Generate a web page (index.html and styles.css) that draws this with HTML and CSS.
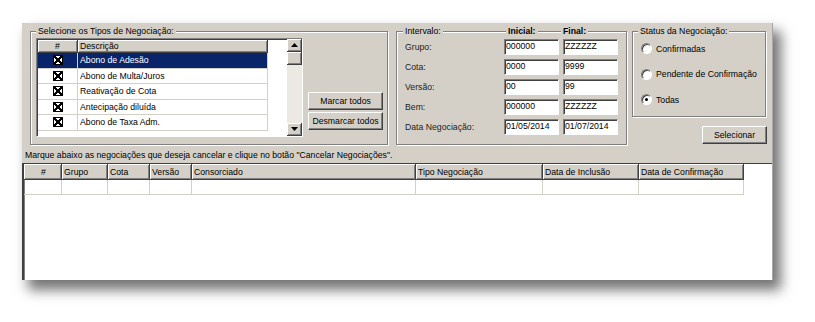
FILE: index.html
```html
<!DOCTYPE html>
<html lang="pt-BR">
<head>
    <meta charset="UTF-8">
    <meta name="viewport" content="width=device-width, initial-scale=1.0">
    <title>Cancelar Negociações</title>
    <link rel="stylesheet" href="styles.css">
</head>
<body>
    <div class="window">
        <div class="filters">
            <div class="group group-types">
                <div class="group-title"><span>Selecione os Tipos de Negociação:</span></div>
                <div class="types-body">
                    <div class="listbox">
                        <div class="list-grid">
                            <div class="list-head">
                                <div class="cell-num">#</div>
                                <div class="cell-desc">Descrição</div>
                            </div>
                            <div class="list-row selected">
                                <div class="cell-num"><span class="check"></span></div>
                                <div class="cell-desc">Abono de Adesão</div>
                            </div>
                            <div class="list-row">
                                <div class="cell-num"><span class="check"></span></div>
                                <div class="cell-desc">Abono de Multa/Juros</div>
                            </div>
                            <div class="list-row">
                                <div class="cell-num"><span class="check"></span></div>
                                <div class="cell-desc">Reativação de Cota</div>
                            </div>
                            <div class="list-row">
                                <div class="cell-num"><span class="check"></span></div>
                                <div class="cell-desc">Antecipação diluída</div>
                            </div>
                            <div class="list-row">
                                <div class="cell-num"><span class="check"></span></div>
                                <div class="cell-desc">Abono de Taxa Adm.</div>
                            </div>
                        </div>
                        <div class="scrollbar">
                            <div class="scroll-btn">
                                <svg width="7" height="4" viewBox="0 0 7 4"><path d="M3.5 0 L7 4 L0 4 Z" fill="#000"/></svg>
                            </div>
                            <div class="scroll-btn scroll-thumb"></div>
                            <div class="scroll-track"></div>
                            <div class="scroll-btn">
                                <svg width="7" height="4" viewBox="0 0 7 4"><path d="M0 0 L7 0 L3.5 4 Z" fill="#000"/></svg>
                            </div>
                        </div>
                    </div>
                    <div class="types-actions">
                        <button class="btn btn-wide">Marcar todos</button>
                        <button class="btn btn-wide">Desmarcar todos</button>
                    </div>
                </div>
            </div>

            <div class="group group-range">
                <div class="group-title range-title">
                    <span>Intervalo:</span>
                    <span class="bold">Inicial:</span>
                    <span class="bold">Final:</span>
                </div>
                <div class="range-body">
                    <label>Grupo:</label>
                    <div class="field">000000</div>
                    <div class="field">ZZZZZZ</div>
                    <label>Cota:</label>
                    <div class="field">0000</div>
                    <div class="field">9999</div>
                    <label>Versão:</label>
                    <div class="field">00</div>
                    <div class="field">99</div>
                    <label>Bem:</label>
                    <div class="field">000000</div>
                    <div class="field">ZZZZZZ</div>
                    <label>Data Negociação:</label>
                    <div class="field">01/05/2014</div>
                    <div class="field">01/07/2014</div>
                </div>
            </div>

            <div class="status-col">
                <div class="group group-status">
                    <div class="group-title"><span>Status da Negociação:</span></div>
                    <div class="status-body">
                        <div class="radio-row"><span class="radio"></span>Confirmadas</div>
                        <div class="radio-row"><span class="radio"></span>Pendente de Confirmação</div>
                        <div class="radio-row"><span class="radio checked"></span>Todas</div>
                    </div>
                </div>
                <button class="btn btn-select">Selecionar</button>
            </div>
        </div>

        <p class="hint">Marque abaixo as negociações que deseja cancelar e clique no botão "Cancelar Negociações".</p>

        <div class="results">
            <table class="results-table">
                <colgroup>
                    <col style="width: 38px">
                    <col style="width: 46px">
                    <col style="width: 42px">
                    <col style="width: 42px">
                    <col style="width: 224px">
                    <col style="width: 127px">
                    <col style="width: 96px">
                    <col style="width: 105px">
                </colgroup>
                <thead>
                    <tr>
                        <th class="center">#</th>
                        <th>Grupo</th>
                        <th>Cota</th>
                        <th>Versão</th>
                        <th>Consorciado</th>
                        <th>Tipo Negociação</th>
                        <th>Data de Inclusão</th>
                        <th>Data de Confirmação</th>
                    </tr>
                </thead>
                <tbody>
                    <tr>
                        <td></td><td></td><td></td><td></td><td></td><td></td><td></td><td></td>
                    </tr>
                </tbody>
            </table>
        </div>
    </div>
</body>
</html>
```

FILE: styles.css
```css
* {
    box-sizing: border-box;
}

body {
    margin: 0;
    padding: 23px 0 42px 22px;
    background-color: #fff;
    font-family: "Liberation Sans", Arial, sans-serif;
    font-size: 8.7px;
    color: #000;
}

.window {
    width: 751px;
    height: 257px;
    background-color: #d4d0c8;
    border-right: 1px solid #a8a8a8;
    box-shadow: 7px 9px 12px 1px rgba(0, 0, 0, 0.55);
    display: flex;
    flex-direction: column;
}

.filters {
    height: 124px;
    padding: 8px 0 0 8px;
    display: flex;
    align-items: flex-start;
}

/* etched group box */
.group {
    border: 1px solid #808080;
    box-shadow: inset 1px 1px 0 #fff, 1px 1px 0 #fff;
}

.group-title {
    display: flex;
    height: 13px;
    line-height: 13px;
    margin: -7px 0 0 5px;
}

.group-title span {
    background-color: #d4d0c8;
    padding: 0 2px;
}

.bold {
    font-weight: bold;
}

/* tipos de negociação */
.group-types {
    width: 358px;
    height: 114px;
}

.types-body {
    display: flex;
    align-items: flex-end;
    padding: 0 0 0 5px;
}

.listbox {
    width: 267px;
    height: 99px;
    display: flex;
    background-color: #fff;
    border-top: 1px solid #808080;
    border-left: 1px solid #808080;
    border-bottom: 1px solid #fff;
    border-right: 1px solid #fff;
    box-shadow: inset 1px 1px 0 #404040;
}

.list-grid {
    flex: 1;
    padding: 1px 0 0 1px;
}

.list-head,
.list-row {
    display: flex;
    width: 230px;
}

.list-head {
    height: 13px;
    line-height: 12px;
}

.list-head div {
    background-color: #d4d0c8;
    border-right: 1px solid #404040;
    border-bottom: 1px solid #404040;
    box-shadow: inset 1px 1px 0 #fff, inset -1px -1px 0 #808080;
}

.list-row {
    height: 15.5px;
    line-height: 15px;
}

.list-row div {
    border-right: 1px solid #d4d0c8;
    border-bottom: 1px solid #d4d0c8;
}

.list-row.selected div {
    background-color: #0a246a;
    color: #fff;
}

.cell-num {
    width: 40px;
    text-align: center;
}

.cell-desc {
    flex: 1;
    padding-left: 2px;
}

.check {
    display: inline-block;
    width: 10px;
    height: 10px;
    vertical-align: -2px;
    background-color: #fff;
    border: 1px solid #000;
    background-image: linear-gradient(45deg, transparent 40%, #000 40%, #000 60%, transparent 60%),
        linear-gradient(-45deg, transparent 40%, #000 40%, #000 60%, transparent 60%);
}

.scrollbar {
    width: 15px;
    display: flex;
    flex-direction: column;
    background-color: #ece9e2;
}

.scroll-btn {
    height: 13px;
    display: flex;
    justify-content: center;
    align-items: center;
    background-color: #d4d0c8;
    border-right: 1px solid #404040;
    border-bottom: 1px solid #404040;
    box-shadow: inset 1px 1px 0 #fff, inset -1px -1px 0 #808080;
}

.scroll-track {
    flex: 1;
}

.types-actions {
    display: flex;
    flex-direction: column;
    gap: 2px;
    margin: 0 0 7px 5px;
}

.btn {
    font-family: inherit;
    font-size: 8.7px;
    height: 18px;
    padding: 0;
    background-color: #d4d0c8;
    border: 1px solid;
    border-color: #fff #404040 #404040 #fff;
    box-shadow: inset -1px -1px 0 #808080;
    color: #000;
}

.btn-wide {
    width: 75px;
}

/* intervalo */
.group-range {
    width: 231px;
    height: 114px;
    margin-left: 8px;
}

.range-title {
    display: grid;
    grid-template-columns: 103px 55px auto;
    margin-left: 6px;
}

.range-title span {
    justify-self: start;
}

.range-body {
    display: grid;
    grid-template-columns: 95px 55px 55px;
    column-gap: 4px;
    row-gap: 4px;
    padding: 1px 0 0 8px;
}

.range-body label {
    line-height: 16px;
    color: #222;
}

.field {
    height: 16px;
    line-height: 13px;
    padding-left: 1px;
    background-color: #fff;
    border-top: 1px solid #808080;
    border-left: 1px solid #808080;
    border-bottom: 1px solid #fff;
    border-right: 1px solid #fff;
    box-shadow: inset 1px 1px 0 #404040;
}

/* status */
.status-col {
    margin-left: 5px;
    display: flex;
    flex-direction: column;
    align-items: flex-end;
}

.group-status {
    width: 134px;
    height: 86px;
}

.status-body {
    display: flex;
    flex-direction: column;
    gap: 12.5px;
    padding: 4px 0 0 8px;
}

.radio-row {
    display: flex;
    align-items: center;
    gap: 4px;
    height: 13px;
}

.radio {
    width: 11px;
    height: 11px;
    border-radius: 50%;
    background-color: #fff;
    border: 1px solid;
    border-color: #808080 #fff #fff #808080;
    box-shadow: inset 1px 1px 0 #404040;
    display: flex;
    justify-content: center;
    align-items: center;
}

.radio.checked::after {
    content: "";
    width: 3px;
    height: 3px;
    border-radius: 50%;
    background-color: #000;
}

.btn-select {
    width: 65px;
    margin-top: 9px;
    margin-right: -1px;
}

.hint {
    margin: 0;
    height: 16px;
    line-height: 16px;
    padding-left: 3px;
}

/* resultados */
.results {
    flex: 1;
    background-color: #fff;
    border-top: 1px solid #404040;
    border-left: 2px solid #404040;
    box-shadow: inset 1px 0 0 #808080;
}

.results-table {
    table-layout: fixed;
    width: 720px;
    border-collapse: separate;
    border-spacing: 0;
}

.results-table th {
    height: 16px;
    padding: 0 0 0 2px;
    text-align: left;
    font-weight: normal;
    background-color: #d4d0c8;
    border-right: 1px solid #404040;
    border-bottom: 1px solid #404040;
    box-shadow: inset 1px 1px 0 #fff, inset -1px -1px 0 #808080;
}

.results-table th.center {
    text-align: center;
}

.results-table td {
    height: 15px;
    padding: 0;
    border-right: 1px solid #d4d0c8;
    border-bottom: 1px solid #d4d0c8;
}
```
